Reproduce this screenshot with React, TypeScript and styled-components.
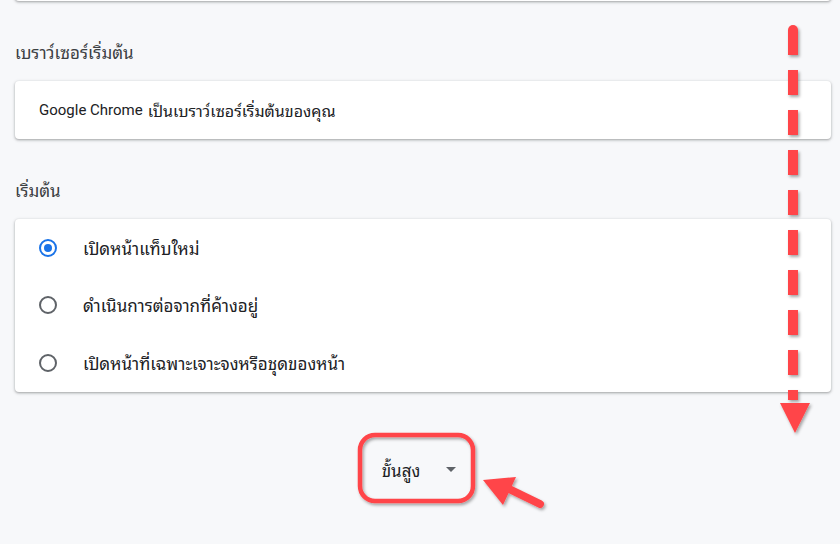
import React, { useState } from 'react';
import styled, { createGlobalStyle } from 'styled-components';

const GlobalStyle = createGlobalStyle`
  html, body {
    margin: 0;
    padding: 0;
    background: #f7f8fa;
  }
  body {
    font-family: "Noto Sans Thai Looped", "Noto Sans Thai", Roboto, sans-serif;
    overflow: hidden;
  }
`;

const options = [
  'เปิดหน้าแท็บใหม่',
  'ดำเนินการต่อจากที่ค้างอยู่',
  'เปิดหน้าที่เฉพาะเจาะจงหรือชุดของหน้า',
];

const App = () => {
  const [selected, setSelected] = useState(0);

  return (
    <>
      <GlobalStyle />
      <Page>
        <TopCard />
        <SectionLabel>เบราว์เซอร์เริ่มต้น</SectionLabel>
        <Card>
          <InfoRow>
            <Latin>Google Chrome</Latin> เป็นเบราว์เซอร์เริ่มต้นของคุณ
          </InfoRow>
        </Card>
        <SectionLabel>เริ่มต้น</SectionLabel>
        <Card>
          {options.map((label, i) => (
            <RadioRow key={label} onClick={() => setSelected(i)}>
              <Radio checked={selected === i} />
              <RowText>{label}</RowText>
            </RadioRow>
          ))}
        </Card>
        <Footer>
          <AdvancedButton>
            ขั้นสูง
            <Caret />
          </AdvancedButton>
        </Footer>
        <Annotations width="840" height="544" viewBox="0 0 840 544">
          <defs>
            <filter id="shadow" x="-20%" y="-20%" width="140%" height="140%">
              <feDropShadow dx="1.5" dy="2" stdDeviation="1.5" floodColor="#000" floodOpacity="0.35" />
            </filter>
          </defs>
          <g filter="url(#shadow)" fill="#ff4548">
            <line x1="793" y1="30" x2="793" y2="400" stroke="#ff4548" strokeWidth="10" strokeDasharray="25 15" />
            <rect x="788" y="25" width="10" height="10" rx="5" />
            <polygon points="780,403 810,403 795,433" />
            <rect x="360" y="435" width="113" height="66" rx="15" fill="none" stroke="#ff4548" strokeWidth="4.5" />
            <line x1="540" y1="504" x2="505" y2="487" stroke="#ff4548" strokeWidth="8" strokeLinecap="round" />
            <polygon points="483,480 516,477 503,505" />
          </g>
        </Annotations>
      </Page>
    </>
  );
};

export default App;

const Page = styled.div`
  position: relative;
  width: 840px;
  height: 544px;
  padding: 0 9px 0 15px;
  box-sizing: border-box;
  overflow: hidden;
`;

const TopCard = styled.div`
  height: 20px;
  margin-top: -19px;
  background: #fff;
  border-radius: 4px;
  box-shadow: 0 1px 2px rgba(60, 64, 67, 0.3), 0 1px 3px 1px rgba(60, 64, 67, 0.15);
`;

const SectionLabel = styled.div`
  margin: 41px 0 19px;
  font-size: 17px;
  line-height: 20px;
  color: #3c4043;
`;

const Card = styled.div`
  background: #fff;
  border-radius: 4px;
  box-shadow: 0 1px 2px rgba(60, 64, 67, 0.3), 0 1px 3px 1px rgba(60, 64, 67, 0.15);
`;

const InfoRow = styled.div`
  height: 58px;
  display: flex;
  align-items: center;
  gap: 5px;
  padding: 0 24px;
  font-size: 16px;
  line-height: 20px;
  color: #202124;
`;

const Latin = styled.span`
  font-family: Roboto, "Liberation Sans", sans-serif;
  font-size: 15px;
`;

const RadioRow = styled.div`
  height: 57.5px;
  display: flex;
  align-items: center;
  padding: 0 24px;
  cursor: pointer;
`;

const Radio = styled.span<{ checked: boolean }>`
  box-sizing: border-box;
  width: 18px;
  height: 18px;
  border-radius: 50%;
  border: 2px solid ${(p) => (p.checked ? '#1a73e8' : '#5f6368')};
  display: flex;
  align-items: center;
  justify-content: center;
  flex-shrink: 0;

  &::after {
    content: '';
    width: 8px;
    height: 8px;
    border-radius: 50%;
    background: ${(p) => (p.checked ? '#1a73e8' : 'transparent')};
  }
`;

const RowText = styled.span`
  margin-left: 26px;
  font-size: 17px;
  line-height: 20px;
  color: #202124;
`;

const Footer = styled.div`
  display: flex;
  justify-content: center;
  margin-top: 60px;
`;

const AdvancedButton = styled.button`
  display: flex;
  align-items: center;
  gap: 26px;
  padding: 0 8px 0 0;
  height: 36px;
  border: none;
  background: transparent;
  font-family: inherit;
  font-size: 17px;
  color: #202124;
  cursor: pointer;
`;

const Caret = styled.span`
  width: 0;
  height: 0;
  border-left: 5px solid transparent;
  border-right: 5px solid transparent;
  border-top: 5px solid #5f6368;
`;

const Annotations = styled.svg`
  position: absolute;
  left: 0;
  top: 0;
  pointer-events: none;
`;
